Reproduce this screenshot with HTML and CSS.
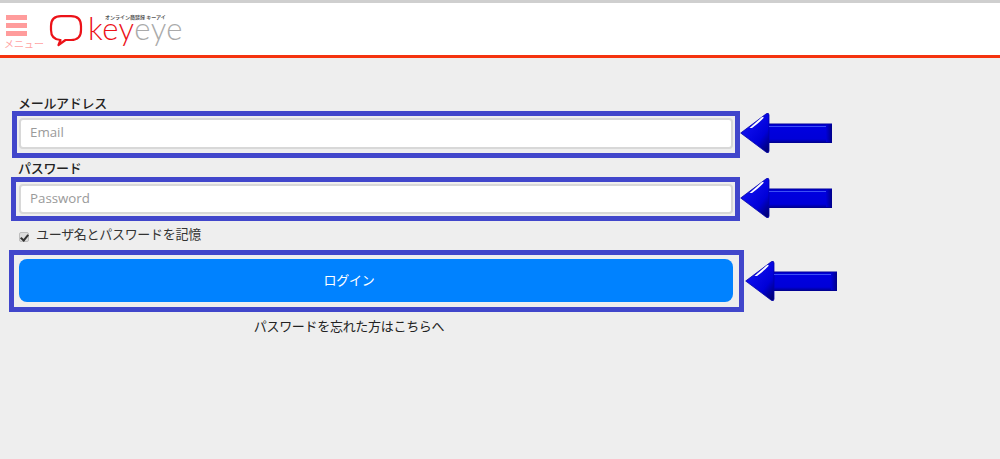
FILE: index.html
```html
<!DOCTYPE html>
<html lang="ja">
<head>
<meta charset="utf-8">
<title>keyeye ログイン</title>
<link rel="stylesheet" href="styles.css">
</head>
<body>
<header class="header">
  <div class="menu">
    <div class="burger"><span></span><span></span><span></span></div>
    <div class="menu-label">メニュー</div>
  </div>
  <div class="logo">
    <svg class="bubble" width="34" height="33" viewBox="0 0 34 33">
      <path d="M12 2.2H22Q32 2.2 32 12V16Q32 26 22 26H16.5L9.5 31L11.5 26Q2 25.5 2 16V12Q2 2.2 12 2.2Z" fill="none" stroke="#ec1218" stroke-width="2.2" stroke-linejoin="round"/>
    </svg>
    <div class="wordmark">
      <div class="tagline">オンライン商談録 キーアイ</div>
      <div class="word"><span class="word-red">key</span><span class="word-grey">eye</span></div>
    </div>
  </div>
</header>
<main class="main">
  <form class="form">
    <label class="label">メールアドレス</label>
    <input class="input input-email" type="text" placeholder="Email">
    <label class="label label-second">パスワード</label>
    <input class="input input-password" type="password" placeholder="Password">
    <label class="remember"><input class="check" type="checkbox" checked><span>ユーザ名とパスワードを記憶</span></label>
    <button class="submit" type="button">ログイン</button>
    <div class="forgot">パスワードを忘れた方はこちらへ</div>
  </form>
</main>
<div class="mark mark-email"></div>
<div class="mark mark-password"></div>
<div class="mark mark-submit"></div>
<svg class="defs" width="0" height="0">
  <defs>
    <linearGradient id="shaft" x1="0" y1="0" x2="0" y2="1">
      <stop offset="0" stop-color="#00009a"/>
      <stop offset=".12" stop-color="#0000e0"/>
      <stop offset=".8" stop-color="#0000d8"/>
      <stop offset="1" stop-color="#000088"/>
    </linearGradient>
    <linearGradient id="head" x1="0.2" y1="0.2" x2="0.9" y2="0.95">
      <stop offset="0" stop-color="#1010f0"/>
      <stop offset=".65" stop-color="#0000d8"/>
      <stop offset="1" stop-color="#00007a"/>
    </linearGradient>
    <linearGradient id="tail" x1="0" y1="0" x2="1" y2="0">
      <stop offset="0" stop-color="#0000d8"/>
      <stop offset="1" stop-color="#000088"/>
    </linearGradient>
    <symbol id="arrow" viewBox="0 0 92 42">
      <path d="M28 11.5H92V31H28Z" fill="url(#shaft)"/>
      <path d="M86 12.5H92V30H86Z" fill="url(#tail)"/>
      <path d="M0.7 21L26.5 1.6Q29 0.6 29 3V39Q29 41.4 26.5 40.4Z" fill="url(#head)" stroke="#0000a8" stroke-width="0.8" stroke-linejoin="round"/>
      <path d="M29 14.5H86" stroke="#3c50f4" stroke-width="1" fill="none"/>
      <path d="M9.5 16L21.5 5.5Q24 4 23.5 6Q20 10 12 16Z" fill="#fff"/>
    </symbol>
  </defs>
</svg>
<svg class="arrow arrow-email"><use href="#arrow"/></svg>
<svg class="arrow arrow-password"><use href="#arrow"/></svg>
<svg class="arrow arrow-submit"><use href="#arrow"/></svg>
</body>
</html>
```
FILE: styles.css
```css
* { box-sizing: border-box; }
html, body { height: 100%; }
body {
  margin: 0;
  background: #eeeeee;
  color: #222;
  font-family: "Noto Sans CJK JP", "Open Sans", sans-serif;
  font-size: 13px;
  letter-spacing: -0.3px;
  overflow: hidden;
  position: relative;
}
.header {
  height: 58px;
  background: #fff;
  border-top: 3px solid #cfcfcf;
  border-bottom: 3px solid #f5330f;
  display: flex;
  align-items: flex-start;
}
.menu { width: 50px; padding: 12px 0 0 4px; }
.burger { display: flex; flex-direction: column; gap: 3.5px; width: 21px; margin-left: 2px; }
.burger span { height: 4.5px; background: #ff9c9c; }
.menu-label { font-size: 10px; line-height: 12px; color: #ffa4a4; margin-top: 2px; letter-spacing: 0; white-space: nowrap; }
.logo { display: flex; align-items: flex-start; padding-top: 11px; }
.bubble { display: block; flex: none; margin-left: -1px; }
.wordmark { margin-left: 6px; position: relative; width: 96px; }
.tagline {
  position: absolute;
  top: 0;
  left: 16px;
  font-size: 5px;
  line-height: 6px;
  font-weight: 700;
  color: #555;
  white-space: nowrap;
  letter-spacing: 0;
}
.word {
  font-family: "Lato", sans-serif;
  font-weight: 300;
  font-size: 31px;
  line-height: 30px;
  letter-spacing: 0.5px;
  margin-top: -1px;
  margin-left: -1px;
}
.word-red { color: #ec1218; }
.word-grey { color: #aaaaaa; }
.main { padding: 35px 0 0 19px; }
.form { display: flex; flex-direction: column; width: 714px; align-items: flex-start; }
.label { font-weight: 500; line-height: 20px; margin: 0 0 5px -1px; }
.label-second { margin-top: 9px; margin-bottom: 6px; }
.input {
  display: block;
  width: 100%;
  background: #fff;
  border: 2px solid #d8d8d8;
  border-radius: 4px;
  padding: 0 9px;
  font-family: "Open Sans", sans-serif;
  font-size: 13.3px;
  letter-spacing: 0;
  color: #333;
  outline: none;
}
.input::placeholder { color: #9a9a9a; opacity: 1; }
.input-email { height: 31px; padding-bottom: 4px; }
.input-password { height: 30px; padding-bottom: 2px; }
.remember { display: flex; align-items: flex-start; height: 20px; margin-top: 10px; line-height: 20px; color: #333; }
.check {
  appearance: none;
  position: relative;
  width: 10px;
  height: 10px;
  margin: 8px 7px 0 0;
  flex: none;
  background: #dcdcdc;
  border: 1px solid #bdbdbd;
  border-radius: 2px;
}
.check:checked::after {
  content: "";
  position: absolute;
  left: 2px;
  top: 0;
  width: 3px;
  height: 6px;
  border: solid #333;
  border-width: 0 2px 2px 0;
  transform: rotate(40deg);
}
.submit {
  width: 100%;
  height: 43px;
  margin-top: 15px;
  padding: 0 54px 3px 0;
  border: 0;
  border-radius: 8px;
  background: #0082ff;
  color: #fff;
  font: inherit;
  letter-spacing: -0.3px;
}
.forgot { width: 660px; margin-top: 14px; line-height: 20px; text-align: center; }
.mark { position: absolute; border: 5px solid #4146cb; }
.mark-email { left: 12px; top: 111px; width: 728px; height: 47px; }
.mark-password { left: 11px; top: 177px; width: 729px; height: 44px; }
.mark-submit { left: 9px; top: 250px; width: 735px; height: 62px; }
.defs { position: absolute; }
.arrow { position: absolute; width: 92px; height: 42px; }
.arrow-email { left: 740px; top: 112px; }
.arrow-password { left: 740px; top: 177px; }
.arrow-submit { left: 745px; top: 260px; }
```
